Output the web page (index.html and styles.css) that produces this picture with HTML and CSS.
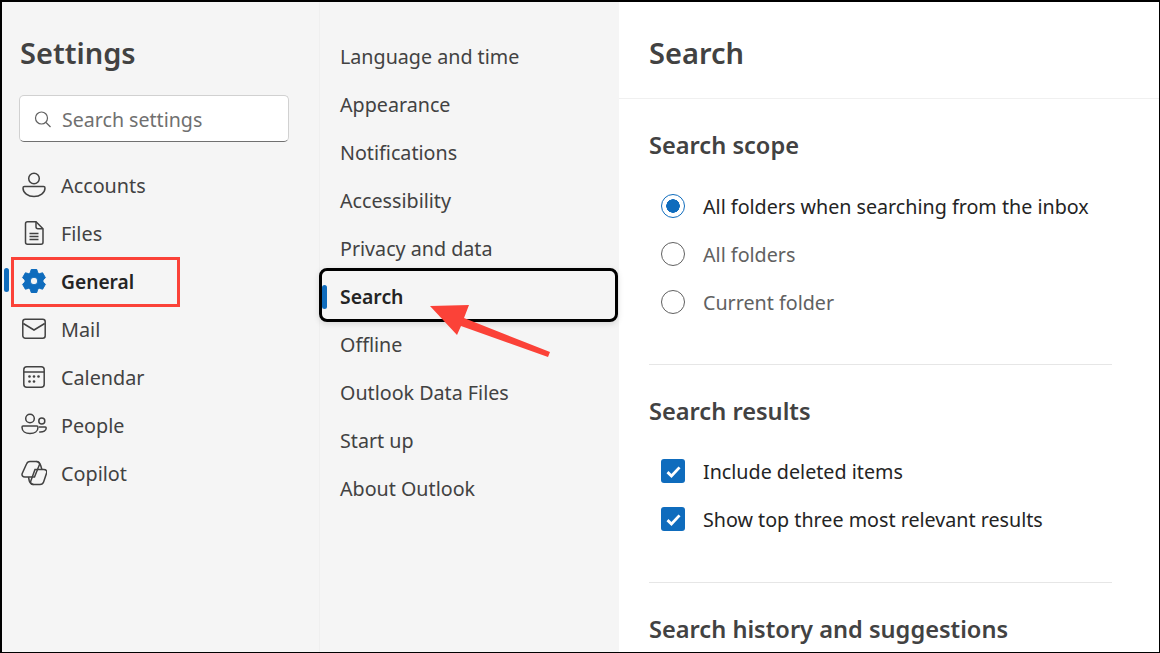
FILE: index.html
```html
<!DOCTYPE html>
<html lang="en">
<head>
<meta charset="utf-8">
<title>Settings</title>
<link rel="stylesheet" href="styles.css">
</head>
<body>
<div class="frame">
  <aside class="nav">
    <h1 class="nav-title">Settings</h1>
    <div class="search-box">
      <svg class="search-icon" viewBox="0 0 17 17"><circle cx="7.500" cy="7" r="6"/><path d="M12 11.500l4.500 4.500"/></svg>
      <span>Search settings</span>
    </div>
    <ul class="nav-list">
      <li class="nav-item"><svg class="ico" viewBox="0 0 26 26"><circle cx="13" cy="6.500" r="5.300"/><path d="M3.500 14.500h19c1 0 1.500.5 1.500 1.500 0 5-5 8.500-11 8.500S2 21 2 16c0-1 .5-1.500 1.500-1.500z"/></svg>Accounts</li>
      <li class="nav-item"><svg class="ico" viewBox="0 0 26 26"><path d="M6.500 1.800h8.500l7 7v13.400a2 2 0 0 1-2 2h-13.500a2 2 0 0 1-2-2v-18.400a2 2 0 0 1 2-2z"/><path d="M15 1.800v5a2 2 0 0 0 2 2h5M8.500 13.500h9M8.500 16.500h9M8.500 19.500h9"/></svg>Files</li>
      <li class="nav-item is-active"><svg class="ico gear" viewBox="0 0 26 26"><path fill-rule="evenodd" d="M10.200 1.500h5.600l.9 3.300 1.600.9 3.300-.9 2.800 4.900-2.400 2.400v1.800l2.400 2.400-2.800 4.900-3.300-.9-1.600.9-.9 3.300h-5.600l-.9-3.300-1.600-.9-3.300.9-2.800-4.900 2.400-2.400v-1.800L1.600 9.700l2.800-4.900 3.300.9 1.600-.9zM13 9.200a3.800 3.800 0 1 0 0 7.600 3.800 3.800 0 0 0 0-7.600z"/></svg>General</li>
      <li class="nav-item"><svg class="ico" viewBox="0 0 26 26"><rect x="1.800" y="3.200" width="22.400" height="19" rx="2.500"/><path d="M2.300 7.500L13 14l10.700-6.500"/></svg>Mail</li>
      <li class="nav-item"><svg class="ico" viewBox="0 0 26 26"><rect x="2.800" y="2.800" width="20.400" height="20.400" rx="3"/><path d="M2.800 8h20.400"/><g class="dots"><circle cx="8.500" cy="12.500" r="1.300"/><circle cx="13" cy="12.500" r="1.300"/><circle cx="17.500" cy="12.500" r="1.300"/><circle cx="8.500" cy="17.500" r="1.300"/><circle cx="13" cy="17.500" r="1.300"/></g></svg>Calendar</li>
      <li class="nav-item"><svg class="ico" viewBox="0 0 26 26"><circle cx="9" cy="6.500" r="4.300"/><path d="M2 14h14c.8 0 1 .4 1 1.200 0 4-3.500 6.300-8 6.300s-8-2.300-8-6.300c0-.8.2-1.200 1-1.200z"/><circle cx="20.800" cy="9" r="3"/><path d="M18 15h6.300c.7 0 .9.400.9 1 0 2.800-2.700 4.300-7 4"/></svg>People</li>
      <li class="nav-item"><svg class="ico" viewBox="0 0 26 26"><path d="M9 1.500h6.500c2 0 3.500 1.500 2.800 3.500L13.500 17H4c-2.300 0-3.500-1.500-2.800-3.500L5.500 4C6.100 2.400 7.500 1.500 9 1.500z"/><path d="M12.500 24.500H19c1.800 0 3-.8 3.600-2.500l3-9c.7-2-.5-3.500-2.800-3.500H14L9.800 21c-.7 2 .7 3.500 2.700 3.500z"/><path d="M15.500 1.500c2 .2 3.600 2 4.200 4l1.200 4M12.500 24.500c-2-.2-3.600-1.500-4.200-3.500L7.500 17"/></svg>Copilot</li>
    </ul>
  </aside>
  <nav class="sub">
    <a class="sub-item">Language and time</a>
    <a class="sub-item">Appearance</a>
    <a class="sub-item">Notifications</a>
    <a class="sub-item">Accessibility</a>
    <a class="sub-item">Privacy and data</a>
    <a class="sub-item is-active">Search</a>
    <a class="sub-item">Offline</a>
    <a class="sub-item">Outlook Data Files</a>
    <a class="sub-item">Start up</a>
    <a class="sub-item">About Outlook</a>
  </nav>
  <main class="content">
    <header class="content-head"><h2>Search</h2></header>
    <div class="content-body">
      <section class="group">
        <h3>Search scope</h3>
        <div class="opt is-on"><span class="radio"></span>All folders when searching from the inbox</div>
        <div class="opt"><span class="radio"></span>All folders</div>
        <div class="opt"><span class="radio"></span>Current folder</div>
      </section>
      <section class="group">
        <h3>Search results</h3>
        <div class="opt is-on"><span class="check"><svg viewBox="0 0 12 12"><path d="M2.200 6.400l2.500 2.400 5.100-5.400"/></svg></span>Include deleted items</div>
        <div class="opt is-on"><span class="check"><svg viewBox="0 0 12 12"><path d="M2.200 6.400l2.500 2.400 5.100-5.400"/></svg></span>Show top three most relevant results</div>
      </section>
      <section class="group last">
        <h3>Search history and suggestions</h3>
      </section>
    </div>
  </main>
  <div class="mark-box"></div>
  <svg class="arrow" viewBox="0 0 121 54"><path d="M0 1L39 0 34 13 120 47 118 52 31 21 27 30z"/></svg>
</div>
</body>
</html>
```
FILE: styles.css
```css
*, *::before, *::after { box-sizing: border-box; }
html, body { margin: 0; height: 100%; }
body { background: #000; font-family: "Noto Sans", sans-serif; color: #424242; overflow: hidden; }
.frame { position: relative; display: flex; width: 1160px; height: 653px; padding: 2px 1px 1px 2px; overflow: hidden; }
.nav { width: 317px; flex: none; background: #f5f5f5; padding: 0 0 0 17px; }
.nav-title { margin: 31px 0 0 1px; font-size: 29px; line-height: 40px; font-weight: 600; color: #424242; }
.search-box { display: flex; align-items: center; gap: 11px; width: 270px; height: 47px; margin-top: 22px; padding: 1px 0 0 14px; background: #fff; border: 1px solid #d1d1d1; border-bottom-color: #707070; border-radius: 5px; font-size: 19.600px; color: #707070; }
.search-icon { width: 17px; height: 17px; fill: none; stroke: #616161; stroke-width: 1.200; flex: none; }
.nav-list { list-style: none; margin: 19px 0 0; padding: 0; }
.nav-item { position: relative; display: flex; align-items: center; height: 48px; gap: 14px; font-size: 19.800px; color: #424242; }
.ico { width: 26px; height: 26px; margin-left: 2px; fill: none; stroke: #424242; stroke-width: 1.500; flex: none; }
.dots { fill: #424242; stroke: none; }
.gear { fill: #0f6cbd; stroke: #0f6cbd; stroke-width: 1; stroke-linejoin: round; }
.nav-item.is-active { font-weight: 600; color: #242424; font-size: 19.200px; }
.nav-item.is-active::before { content: ""; position: absolute; left: -15px; top: 11px; width: 5px; height: 24px; border-radius: 3px; background: #0f6cbd; }
.nav-item.is-active::after { content: ""; position: absolute; left: -8px; top: 0; width: 169px; height: 50px; border: 3px solid #fb4238; }
.sub { width: 300px; flex: none; background: #f5f5f5; border-left: 1px solid #efefef; padding: 30px 0 0 20px; }
.sub-item { position: relative; display: flex; align-items: center; height: 48px; font-size: 19.700px; color: #424242; }
.sub-item.is-active { font-weight: 600; color: #242424; font-size: 19.400px; }
.sub-item.is-active::before { content: ""; position: absolute; left: -18px; top: 13px; width: 5px; height: 24px; border-radius: 3px; background: #0f6cbd; }
.mark-box { position: absolute; left: 319px; top: 268px; width: 299px; height: 54px; border: 3px solid #000; border-radius: 8px; box-shadow: 0 2px 6px rgba(0,0,0,.12); }
.content { flex: 1; background: #fff; display: flex; flex-direction: column; min-width: 0; overflow: hidden; }
.content-head { flex: none; height: 97px; border-bottom: 1px solid #f0f0f0; padding: 31px 0 0 30px; }
.content-head h2 { margin: 0; font-size: 29px; line-height: 40px; font-weight: 600; color: #424242; }
.content-body { padding: 0 47px 0 30px; }
.group { border-bottom: 1px solid #e6e6e6; padding-top: 26px; padding-bottom: 38px; }
.group + .group { padding-top: 26px; padding-bottom: 39px; }
.group.last { border: 0; padding-top: 26px; }
.group h3 { margin: 0 0 17px; font-size: 23.600px; line-height: 40px; font-weight: 600; color: #424242; }
.group + .group h3 { margin-bottom: 16px; }
.group.last h3 { margin-bottom: 0; }
.opt { display: flex; align-items: center; height: 48px; gap: 18px; padding-left: 12px; font-size: 19.700px; color: #616161; }
.opt.is-on { color: #242424; }
.radio { width: 24px; height: 24px; border-radius: 50%; border: 1.500px solid #616161; flex: none; background: #fff; }
.is-on .radio { border-color: #0f6cbd; background: radial-gradient(circle, #0f6cbd 0 6.500px, #fff 7px); }
.check { display: flex; align-items: center; justify-content: center; width: 24px; height: 24px; border-radius: 3px; background: #0f6cbd; flex: none; }
.check svg { width: 19px; height: 19px; fill: none; stroke: #fff; stroke-width: 1.800; }
.arrow { position: absolute; left: 430px; top: 305px; width: 121px; height: 54px; fill: #fb4238; }
```
